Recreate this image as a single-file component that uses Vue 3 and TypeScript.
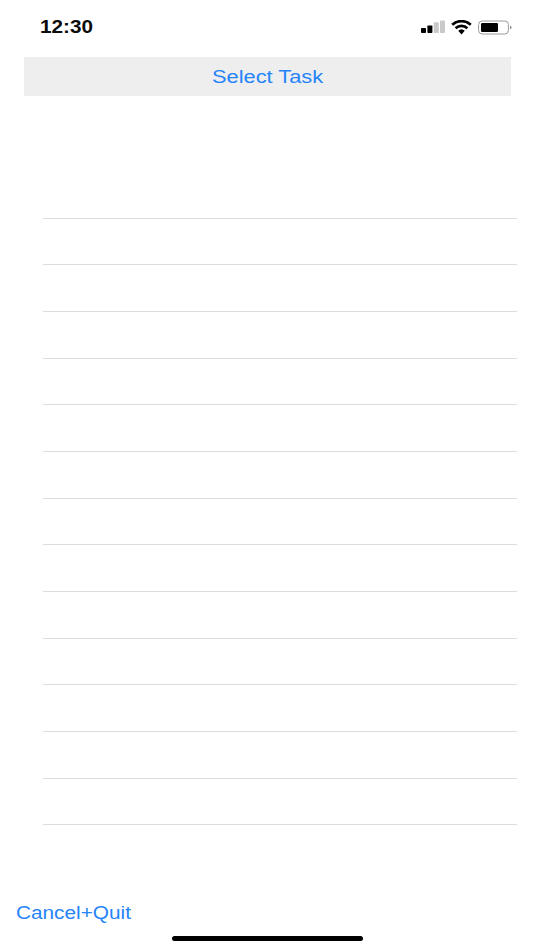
<script setup lang="ts">
const rows: number[] = Array.from({ length: 14 }, (_, i) => i);
</script>

<template>
  <div class="screen">
    <header class="status">
      <span class="time">12:30</span>
      <div class="indicators">
        <svg class="signal" width="24" height="14" viewBox="0 0 24 14">
          <rect x="0" y="8" width="5" height="5" rx="0.8" fill="#000" />
          <rect x="6.4" y="5.4" width="5" height="7.6" rx="0.8" fill="#000" />
          <rect x="12.8" y="2.2" width="5" height="10.8" rx="0.8" fill="#c9c9c9" />
          <rect x="19" y="0.4" width="5" height="12.6" rx="0.8" fill="#c9c9c9" />
        </svg>
        <svg class="wifi" width="21" height="15" viewBox="0 0 21 15">
          <path d="M1.2 4.8 A13.5 13.5 0 0 1 19.8 4.8" fill="none" stroke="#000" stroke-width="2.6" />
          <path d="M4.6 8.2 A8.6 8.6 0 0 1 16.4 8.2" fill="none" stroke="#000" stroke-width="2.6" />
          <path d="M7.2 10.8 A4.8 4.8 0 0 1 13.8 10.8 L10.5 14.4 Z" fill="#000" />
        </svg>
        <svg class="battery" width="34" height="15" viewBox="0 0 34 15">
          <rect x="0.6" y="1" width="29.8" height="13" rx="3.6" fill="none" stroke="#9a9a9a" stroke-width="1" />
          <rect x="3" y="3" width="17" height="9" rx="1.2" fill="#000" />
          <path d="M32 5.8 C33 6.1 33.6 6.7 33.6 7.5 C33.6 8.3 33 8.9 32 9.2 Z" fill="#8e8e8e" />
        </svg>
      </div>
    </header>

    <button class="select" type="button"><span class="select-label">Select Task</span></button>

    <ul class="list">
      <li v-for="row in rows" :key="row" class="row"></li>
    </ul>

    <footer class="footer">
      <button class="quit" type="button"><span class="quit-label">Cancel+Quit</span></button>
    </footer>
    <div class="home"></div>
  </div>
</template>

<style scoped>
.screen {
  position: relative;
  width: 534px;
  height: 950px;
  overflow: hidden;
  background: #fff;
  font-family: "Liberation Sans", Arial, sans-serif;
}
.status {
  height: 57px;
  box-sizing: border-box;
  padding: 15px 22px 0 40px;
  display: flex;
  justify-content: space-between;
  align-items: flex-start;
}
.time {
  display: inline-block;
  font-size: 18px;
  line-height: 24px;
  font-weight: 700;
  color: #0b0b0b;
  transform: scaleX(1.15);
  transform-origin: left center;
}
.indicators {
  display: flex;
  align-items: center;
  gap: 6px;
  height: 24px;
}
.select {
  display: block;
  width: 487px;
  height: 39px;
  margin: 0 0 0 24px;
  padding: 0;
  border: 0;
  background: #eeeeee;
  color: #2684fb;
  font: inherit;
  font-size: 18.7px;
  text-align: center;
}
.select-label {
  display: inline-block;
  transform: scaleX(1.167);
}
.list {
  list-style: none;
  margin: 0;
  padding: 76px 17px 0 43px;
}
.row {
  height: 46.67px;
  box-sizing: border-box;
  border-bottom: 1px solid #dcdcdc;
}
.footer {
  position: absolute;
  left: 16px;
  bottom: 25px;
}
.quit {
  padding: 0;
  border: 0;
  background: none;
  color: #2684fb;
  font: inherit;
  font-size: 18.7px;
  line-height: 24px;
}
.quit-label {
  display: inline-block;
  transform: scaleX(1.112);
  transform-origin: left center;
}
.home {
  position: absolute;
  left: 172px;
  bottom: 9px;
  width: 191px;
  height: 5px;
  border-radius: 3px;
  background: #000;
}
</style>
